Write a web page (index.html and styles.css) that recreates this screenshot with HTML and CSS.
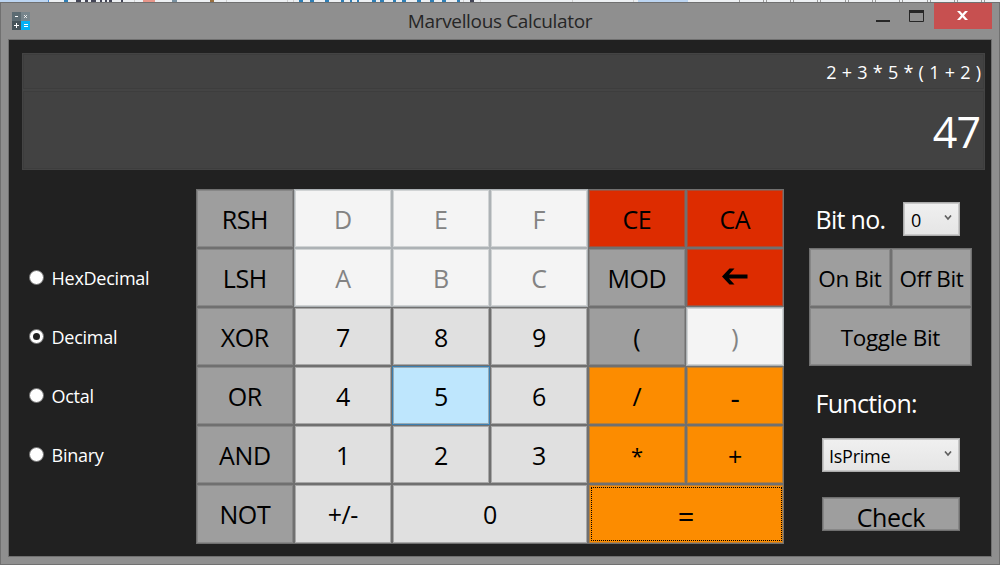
FILE: index.html
```
<!DOCTYPE html>
<html lang="en">
<head>
<meta charset="utf-8">
<title>Marvellous Calculator</title>
<link rel="stylesheet" href="styles.css">
</head>
<body>
<svg class="backdrop" width="1000" height="2" viewBox="0 0 1000 2">
  <rect width="1000" height="2" fill="#edf0f3"/>
  <rect width="48" height="2" fill="#bcd5f2"/><rect x="48" width="1" height="2" fill="#4a90d9"/>
  <path d="M64 1h4M341 1h3M350 1h2M357 1h2M372 1h4M380 1h4M393 1h3M402 1h4M417 1h4M430 1h4M442 1h4M457 1h3M299 1h4M310 1h4M325 1h4" stroke="#2f7fb5" stroke-width="2"/>
  <path d="M76 1h5M85 1h3M91 1h5M100 1h2M105 1h2M109 1h3M121 1h2M470 1h4" stroke="#444657" stroke-width="2"/>
  <path d="M143 1h12" stroke="#e8968a" stroke-width="2"/><path d="M172 1h5" stroke="#7890a0" stroke-width="2"/><path d="M210 1h4" stroke="#9a7040" stroke-width="2"/>
  <rect x="638" width="50" height="2" fill="#bcd5f2"/>
  <path d="M134.500 0v2M226.500 0v2M287.500 0v2M293.500 0v2M463.500 0v2M480.500 0v2M572.500 0v2M633.500 0v2" stroke="#d0d0d0"/>
  <path d="M739.500 0v2M763.500 0v2M766.500 0v2M790.500 0v2M793.500 0v2M817.500 0v2M820.500 0v2M845.500 0v2M848.500 0v2M872.500 0v2M875.500 0v2M899.500 0v2M902.500 0v2M927.500 0v2M930.500 0v2M954.500 0v2M957.500 0v2M981.500 0v2M984.500 0v2" stroke="#999"/>
</svg>
<div class="window">
  <header class="titlebar">
    <svg class="app-icon" width="18" height="18" viewBox="0 0 18 18">
      <rect width="9" height="9" fill="#5c6b72"/><rect x="9" width="9" height="9" fill="#77858c"/>
      <rect y="9" width="9" height="9" fill="#465359"/><rect x="9" y="9" width="9" height="9" fill="#05b0f5"/>
      <path d="M3 4.500h3M2 13.500h5M4.500 11v5M12 12.500h4M12 14.500h4" stroke="#fff"/>
      <path d="M12.200 3.200l2.600 2.600M14.800 3.200l-2.600 2.600" stroke="#fff"/>
    </svg>
    <h1 class="title">Marvellous Calculator</h1>
    <div class="controls">
      <svg width="58" height="26" viewBox="0 0 58 26"><path d="M0 18h14" stroke="#262626" stroke-width="2"/><path d="M33.500 8v10.500h14V8" fill="none" stroke="#262626"/><rect x="33" y="7" width="15" height="3" fill="#262626"/></svg>
      <div class="close"><svg width="11" height="9" viewBox="0 0 11 9"><path d="M0 0h3l2.500 2.700L8 0h3L7 4.500 11 9H8L5.500 6.300 3 9H0l4-4.500z" fill="#fff"/></svg></div>
    </div>
  </header>
  <main class="client">
    <section class="display">
      <div class="expression">2 + 3 * 5 * ( 1 + 2 )</div>
      <div class="result">47</div>
    </section>
    <section class="body">
      <div class="bases">
        <div class="radio"><i></i><span>HexDecimal</span></div>
        <div class="radio on"><i></i><span>Decimal</span></div>
        <div class="radio"><i></i><span>Octal</span></div>
        <div class="radio"><i></i><span>Binary</span></div>
      </div>
      <div class="keys">
        <div class="key">RSH</div><div class="key off">D</div><div class="key off">E</div><div class="key off">F</div><div class="key red">CE</div><div class="key red">CA</div>
        <div class="key">LSH</div><div class="key off">A</div><div class="key off">B</div><div class="key off">C</div><div class="key">MOD</div>
        <div class="key red"><svg class="arrow" width="26" height="17" viewBox="0 0 26 17"><path d="M0 8.500L7.500 0.500H12.500L7 6.500H25.500V10.500H7L12.500 16.500H7.500z"/></svg></div>
        <div class="key">XOR</div><div class="key num">7</div><div class="key num">8</div><div class="key num">9</div><div class="key">(</div><div class="key off">)</div>
        <div class="key">OR</div><div class="key num">4</div><div class="key num hover">5</div><div class="key num">6</div><div class="key op">/</div><div class="key op minus">-</div>
        <div class="key">AND</div><div class="key num">1</div><div class="key num">2</div><div class="key num">3</div><div class="key op times">*</div><div class="key op plus">+</div>
        <div class="key">NOT</div><div class="key num">+/-</div><div class="key num wide">0</div><div class="key op wide focus equals">=</div>
      </div>
      <div class="side">
        <div class="bit-row"><span class="label">Bit no.</span><div class="combo small"><span>0</span><svg width="8" height="6" viewBox="0 0 8 6"><path d="M1 .5l3 3.500 3-3.500" fill="none" stroke="#606060" stroke-width="1.700"/></svg></div></div>
        <div class="bit-keys"><div class="key">On Bit</div><div class="key">Off Bit</div><div class="key toggle">Toggle Bit</div></div>
        <div class="label function">Function:</div>
        <div class="combo"><span>IsPrime</span><svg width="8" height="6" viewBox="0 0 8 6"><path d="M1 .5l3 3.500 3-3.500" fill="none" stroke="#606060" stroke-width="1.700"/></svg></div>
        <div class="key check">Check</div>
      </div>
    </section>
  </main>
</div>
</body>
</html>
```
FILE: styles.css
```
* { box-sizing: border-box; }
body { margin: 0; width: 1000px; height: 565px; overflow: hidden; font-family: "Open Sans", "Noto Sans", sans-serif; }
.backdrop { display: block; }
.window { height: 563px; background: #8f8f8f; border: 1px solid #707070; padding: 0 7px 7px; }
.titlebar { height: 36px; display: grid; grid-template-columns: 120px 1fr 120px; }
.app-icon { margin: 9px 0 0 4px; }
.title { margin: 0; text-align: center; font-size: 19px; line-height: 36px; font-weight: 400; color: #262626; letter-spacing: -.35px; }
.controls { display: flex; justify-content: flex-end; }
.close { width: 58px; height: 26px; background: #c75050; display: flex; justify-content: center; padding: 8px 1px 0 0; }
.client { height: 518px; border: 1px solid #707070; background: #212121; padding: 13px 6px 0 13px; }
.display { height: 117px; color: #fff; text-align: right; width: 963px; background: #444; }
.expression, .result { border: 1px solid #444; outline: 1px solid #3d3d3d; outline-offset: -2px; background: #424242; padding-right: 3px; }
.expression { height: 37px; font-size: 18px; line-height: 36px; word-spacing: .55px; }
.result { height: 80px; font-size: 43px; line-height: 81px; letter-spacing: -1px; padding-right: 4px; }
.body { display: flex; padding-top: 19px; }
.bases { width: 174px; padding: 59px 0 0 7px; color: #fff; font-size: 18px; letter-spacing: -.25px; }
.radio { height: 59px; display: flex; align-items: center; gap: 7.5px; }
.radio i { width: 15px; height: 15px; border-radius: 50%; background: #fff; border: 1px solid #707070; display: grid; place-items: center; }
.radio.on i::after { content: ""; width: 7px; height: 7px; border-radius: 50%; background: #212121; }
.keys { display: grid; grid-template-columns: repeat(6, 98px); grid-template-rows: repeat(5, 59px) 60px; }
.key { border: 1px solid #707070; box-shadow: inset 0 0 0 1px rgba(112,112,112,.5); background: #9e9e9e; color: #000; font-size: 25px; line-height: 1; letter-spacing: -.4px; display: flex; align-items: center; justify-content: center; padding: 1px .3px 0 0; }
.off { border-color: #adb2b5; box-shadow: inset 0 0 0 1px #d0d3d4; background: #f4f4f4; color: #838383; }
.num { background: #e0e0e0; }
.hover { border-color: #3c7fb1; background: #bee6fd; }
.red { background: #dd2c00; }
.op { background: #fc8c00; }
.wide { grid-column: span 2; }
.minus { font-size: 29px; padding-top: 3px; }
.times { font-size: 22px; }
.plus { padding-top: 3px; }
.equals { font-size: 29px; padding-top: 3px; }
.focus { position: relative; }
.focus::after { content: ""; position: absolute; inset: 2px 1px 2px 2px; border: 1px dotted #000; }
.arrow { margin: 0 0 4px 1px; }
.side { width: 164px; margin-left: 25px; }
.label { color: #fff; font-size: 25px; line-height: 34px; letter-spacing: -.7px; padding-left: 6.5px; }
.bit-row { display: flex; justify-content: space-between; padding: 13px 13px 12px 0; }
.combo { width: 138px; height: 34px; margin-left: 13px; border: 1px solid #acacac; box-shadow: inset 0 0 0 1px #c8c8c8; background: linear-gradient(#f0f0f0, #e5e5e5); color: #000; font-size: 18px; line-height: 34px; letter-spacing: -.25px; display: flex; justify-content: space-between; padding: 0 7px 0 6px; }
.combo svg { margin-top: 12px; }
.small { width: 57px; margin: 0; padding-left: 7px; }
.bit-keys { width: 163px; display: grid; grid-template-columns: 82px 81px; grid-template-rows: 59px 59px; }
.bit-keys .key { font-size: 22.5px; padding-top: 3px; }
.bit-keys .toggle { grid-column: span 2; letter-spacing: -.35px; }
.function { padding-top: 20px; margin-bottom: 18px; }
.check { width: 138px; height: 34px; margin: 25px 0 0 13px; padding-top: 6px; }
```
